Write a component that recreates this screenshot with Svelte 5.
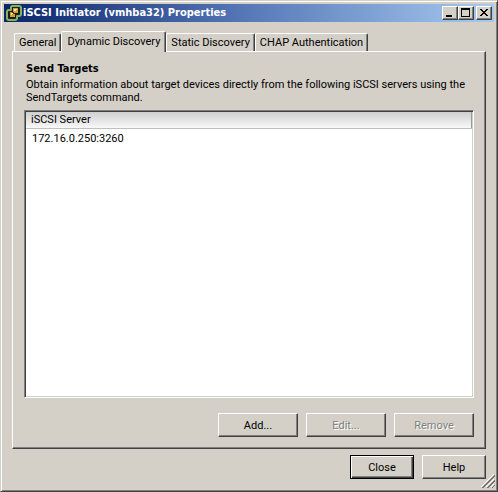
<script>
	const tabs = ['General', 'Dynamic Discovery', 'Static Discovery', 'CHAP Authentication'];
	let active = $state('Dynamic Discovery');
	let servers = $state(['172.16.0.250:3260']);
</script>

<div class="window">
	<header class="titlebar">
		<svg class="logo" width="16" height="16" viewBox="0 0 16 16" aria-hidden="true">
			<path d="M6 1H13Q15 1 15 3V9Q15 11 13 11H11V13Q11 15 9 15H3Q1 15 1 13V7Q1 5 3 5H5V2Z" fill="#14201c" stroke="#86b35a" stroke-width="2" stroke-linejoin="round" />
			<path d="M7 3H12V8H9V12H4V7H7Z" fill="#d99a3a" />
			<path d="M8 4H11V5H10V6H8ZM5 8H7V9H6V10H5Z" fill="#fbe3a0" />
			<path d="M6 7H8V8H9V9H7V8H6Z" fill="#50391c" />
		</svg>
		<h1>iSCSI Initiator (vmhba32) Properties</h1>
		<div class="controls">
			<button aria-label="Minimize">
				<svg width="12" height="10" viewBox="0 0 12 10"><path d="M2 7H8V9H2Z" /></svg>
			</button>
			<button aria-label="Maximize">
				<svg width="12" height="10" viewBox="0 0 12 10"><path d="M1 0H10V9H1ZM2 2V8H9V2Z" fill-rule="evenodd" /></svg>
			</button>
			<button class="close" aria-label="Close window">
				<svg width="12" height="10" viewBox="0 0 12 10"><path d="M2 1H4V2H5V3H7V2H8V1H10V2H9V3H8V4H7V5H8V6H9V7H10V8H8V7H7V6H5V7H4V8H2V7H3V6H4V5H5V4H4V3H3V2H2Z" /></svg>
			</button>
		</div>
	</header>

	<main>
		<div class="tabs" role="tablist">
			{#each tabs as tab}
				<button role="tab" class:active={tab === active} aria-selected={tab === active} onclick={() => (active = tab)}>{tab}</button>
			{/each}
		</div>

		<section class="panel" role="tabpanel">
			<h2>Send Targets</h2>
			<p>Obtain information about target devices directly from the following iSCSI servers using the SendTargets command.</p>
			<div class="list">
				<table>
					<thead>
						<tr><th>iSCSI Server</th></tr>
					</thead>
					<tbody>
						{#each servers as server}
							<tr><td>{server}</td></tr>
						{/each}
					</tbody>
				</table>
			</div>
			<div class="actions">
				<button class="btn">Add...</button>
				<button class="btn" disabled>Edit...</button>
				<button class="btn" disabled>Remove</button>
			</div>
		</section>

		<footer>
			<button class="btn small default">Close</button>
			<button class="btn small">Help</button>
		</footer>
	</main>

	<svg class="grip" width="14" height="14" viewBox="0 0 14 14" aria-hidden="true">
		<path d="M0 13L13 0M5 13L13 5M10 13L13 10" stroke="#fff" />
		<path d="M1 14L14 1M2 14L14 2M6 14L14 6M7 14L14 7M11 14L14 11" stroke="#777570" />
	</svg>
</div>

<style>
	:global(body) {
		margin: 0;
	}

	.window {
		position: relative;
		display: flex;
		flex-direction: column;
		box-sizing: border-box;
		min-height: 100vh;
		padding: 3px;
		border: 1px solid;
		border-color: #d4d0c8 #404040 #404040 #d4d0c8;
		box-shadow: inset 1px 1px #fff, inset -1px -1px #808080;
		background: #d4d0c8;
		color: #000;
		font: 11px/13px Tahoma, Roboto, sans-serif;
	}

	button {
		box-sizing: border-box;
		margin: 0;
		padding: 0;
		border: 1px solid;
		border-color: #fff #404040 #404040 #fff;
		background: #d4d0c8;
		color: #000;
		font: inherit;
	}

	.titlebar {
		display: flex;
		align-items: center;
		height: 18px;
		padding: 0 2px;
		background: linear-gradient(90deg, #0a246a, #5779b8, #a6caf0);
	}

	h1,
	h2 {
		font-family: Tahoma, "DejaVu Sans Condensed", "DejaVu Sans", sans-serif;
		font-size: 11px;
	}

	h1 {
		flex: 1;
		margin: 0 0 0 1px;
		color: #fff;
		line-height: 18px;
		white-space: nowrap;
	}

	.controls {
		display: flex;
	}

	.controls button {
		display: flex;
		width: 16px;
		height: 14px;
		padding: 1px;
		box-shadow: inset -1px -1px #808080;
	}

	.controls .close {
		margin-left: 2px;
	}

	main {
		display: flex;
		flex: 1;
		flex-direction: column;
		padding: 9px 8px 9px;
	}

	.tabs {
		display: flex;
		align-items: flex-end;
		height: 20px;
		padding-left: 2px;
	}

	.tabs button {
		height: 18px;
		padding: 0 4px;
		border-bottom: 0;
		border-radius: 2px 2px 0 0;
		box-shadow: inset -1px 0 #808080;
		white-space: nowrap;
	}

	.tabs .active {
		z-index: 1;
		height: 21px;
		margin-bottom: -1px;
		padding: 0 5px 2px;
	}

	.panel {
		display: flex;
		flex: 1;
		flex-direction: column;
		padding: 10px 11px 11px;
		border: 1px solid;
		border-color: #fff #404040 #404040 #fff;
		box-shadow: inset -1px -1px #808080;
	}

	h2 {
		margin: 0 2px 3px;
		line-height: 13px;
	}

	p {
		margin: 0 2px 6px;
	}

	.list {
		flex: 1;
		border: 1px solid;
		border-color: #808080 #fff #fff #808080;
		box-shadow: inset 1px 1px #404040, inset -1px -1px #d4d0c8;
		padding: 1px;
		background: #fff;
	}

	table {
		width: 100%;
		border-collapse: collapse;
	}

	th {
		height: 16px;
		box-sizing: border-box;
		padding: 0 5px;
		border-right: 1px solid #999;
		border-bottom: 1px solid #c0c0c0;
		background: linear-gradient(#cfcfcf, #f8f8f8);
		font-weight: normal;
		line-height: 15px;
		text-align: left;
	}

	td {
		padding: 3px 6px;
	}

	.actions,
	footer {
		display: flex;
		justify-content: flex-end;
		gap: 8px;
	}

	.actions {
		margin-top: 15px;
	}

	footer {
		margin-top: 6px;
	}

	.btn {
		width: 80px;
		height: 24px;
		box-shadow: inset -1px -1px #808080;
	}

	.btn:disabled {
		color: #808080;
		text-shadow: 1px 1px #fff;
	}

	.small {
		width: 64px;
	}

	.default {
		border-color: #000;
		box-shadow: inset 1px 1px #fff, inset -1px -1px #404040, inset -2px -2px #808080;
	}

	.grip {
		position: absolute;
		right: 2px;
		bottom: 3px;
	}
</style>
